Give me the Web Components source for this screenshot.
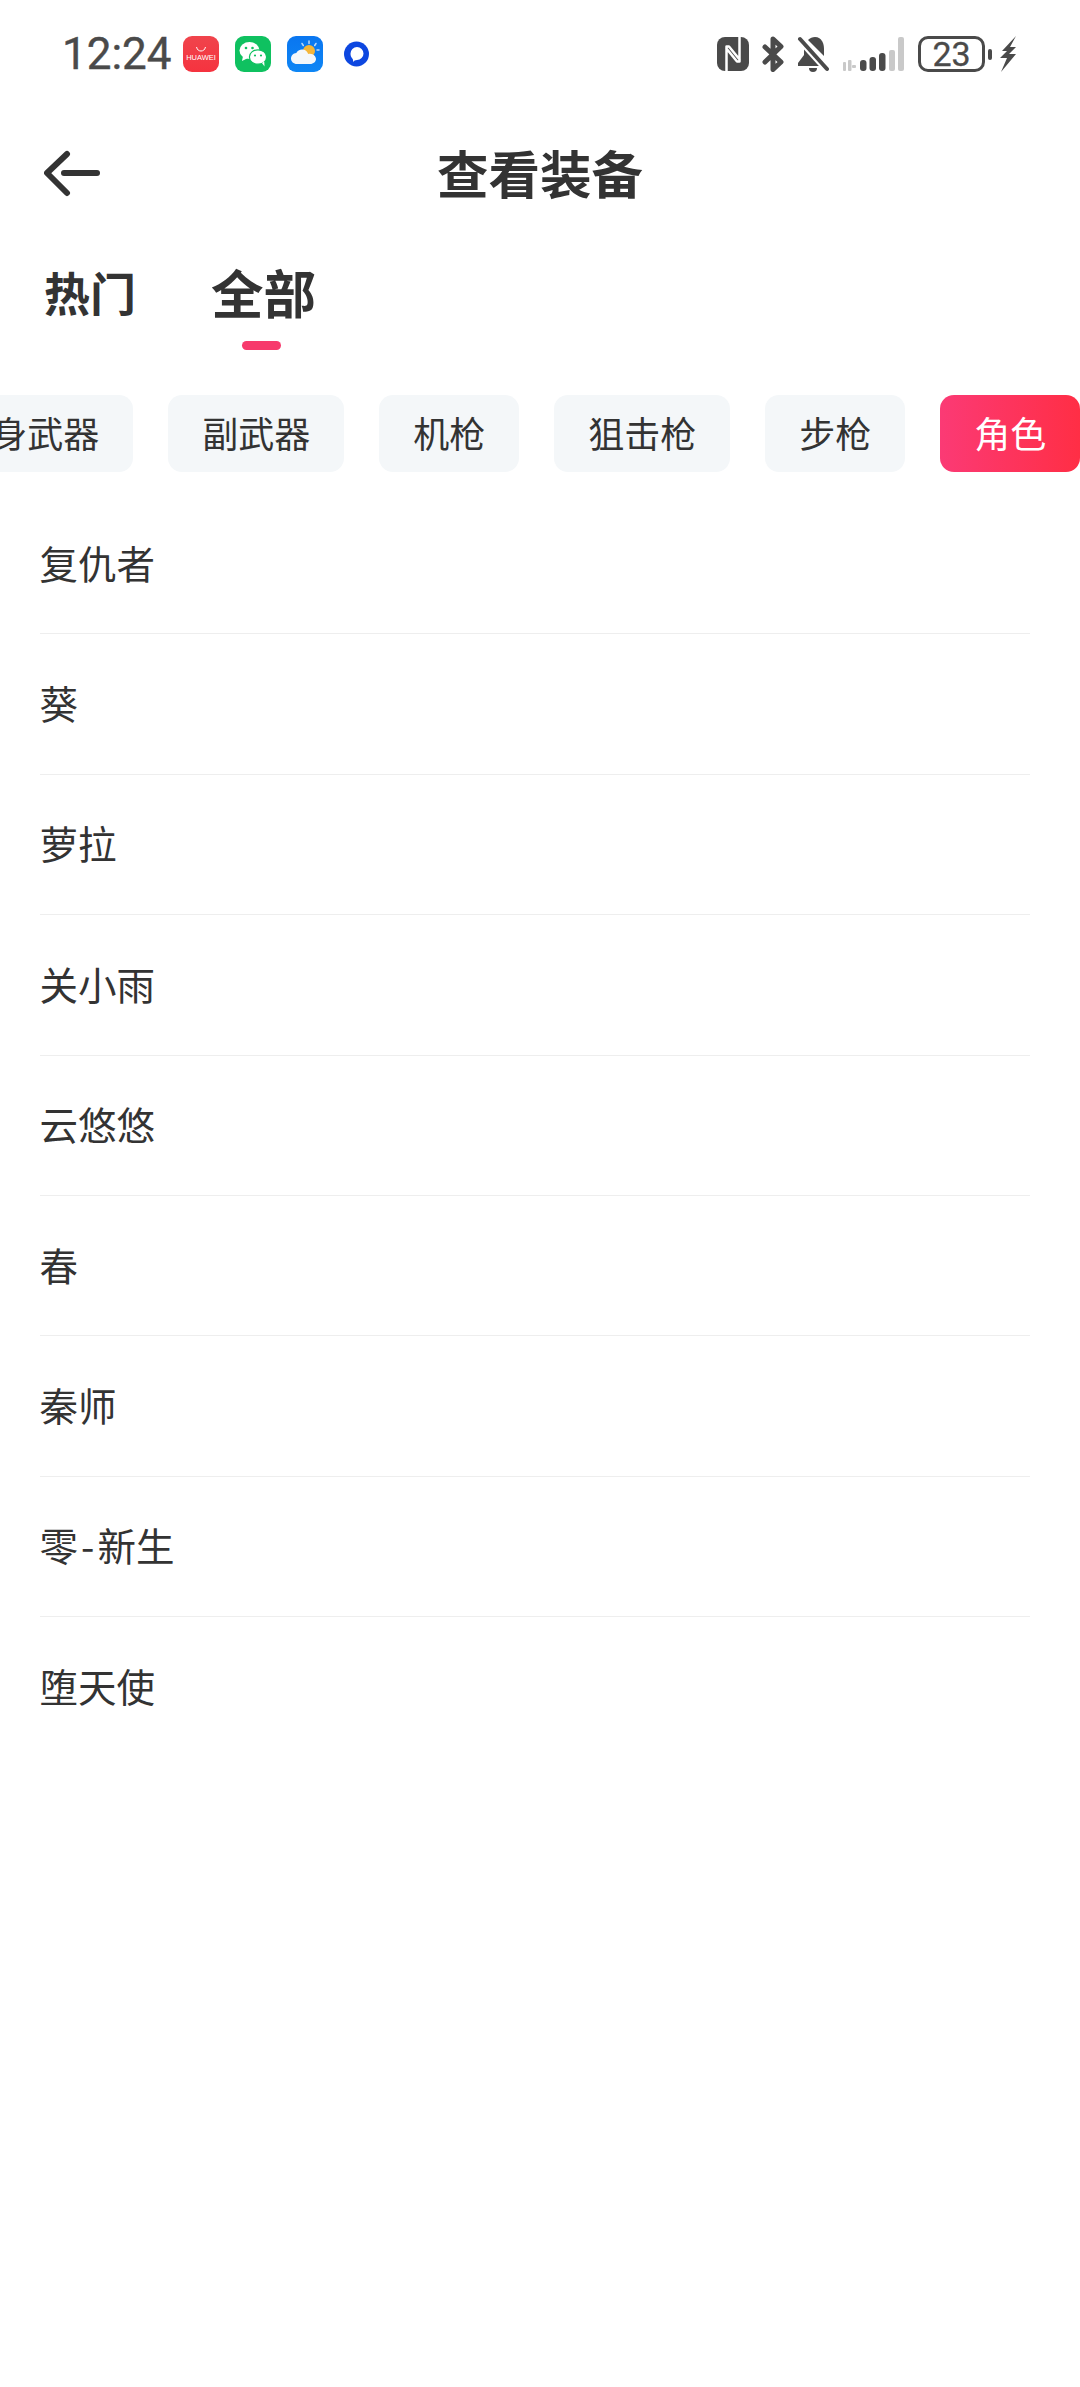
<!DOCTYPE html>
<html lang="zh">
<head>
<meta charset="utf-8">
<title>查看装备</title>
<style>
  html, body { margin: 0; background: #fff; }
  body { font-family: "Noto Sans CJK SC", "Noto Sans", sans-serif; color: #333; }
</style>
</head>
<body>
<equip-page>
  <status-bar></status-bar>
  <nav-bar>查看装备</nav-bar>
  <tab-row></tab-row>
  <chip-row></chip-row>
  <equip-list>
    <equip-row>复仇者</equip-row>
    <equip-row>葵</equip-row>
    <equip-row>萝拉</equip-row>
    <equip-row>关小雨</equip-row>
    <equip-row>云悠悠</equip-row>
    <equip-row>春</equip-row>
    <equip-row>秦师</equip-row>
    <equip-row>零<span style="margin: 0 3px">-</span>新生</equip-row>
    <equip-row>堕天使</equip-row>
  </equip-list>
</equip-page>

<script>
class EquipPage extends HTMLElement {
  constructor() {
    super();
    this.attachShadow({ mode: "open" });
    this.shadowRoot.innerHTML = `
      <style>
        :host { display: flex; flex-direction: column; width: 1080px; height: 2387px; overflow: hidden; background: #fff; }
      </style>
      <slot></slot>
    `;
  }
}

class StatusBar extends HTMLElement {
  constructor() {
    super();
    this.attachShadow({ mode: "open" });
    this.shadowRoot.innerHTML = `
      <style>
        :host { display: flex; align-items: center; justify-content: space-between; height: 108px; padding: 0 63px 0 62px; box-sizing: border-box; color: #4a4a4a; }
        .left, .right { display: flex; align-items: center; }
        .time { font: 400 44px/1 Roboto, sans-serif; -webkit-text-stroke: 0.4px #4a4a4a; width: 121px; }
        .apps { display: flex; gap: 16px; align-items: center; }
        .app { width: 36px; height: 36px; border-radius: 9px; display: flex; align-items: center; justify-content: center; position: relative; overflow: hidden; }
        .huawei { background: linear-gradient(#f0444c, #f5333f); flex-direction: column; color: #fff; }
        .huawei span { font: 500 7.500px/1 "Liberation Sans", sans-serif; margin-top: 1px; }
        .wechat { background: #0fc160; }
        .weather { background: linear-gradient(#0a76f0, #0e86f5); }
        svg { display: block; }
        .right { gap: 13px; }
        .batt { display: flex; align-items: center; gap: 3px; margin-left: 1px; }
        .cell { width: 67px; height: 36px; box-sizing: border-box; border: 3px solid #4a4a4a; border-radius: 10px; font: 400 34px/1 Roboto, sans-serif; -webkit-text-stroke: 0.3px #4a4a4a; display: flex; align-items: center; justify-content: center; }
        .nub { width: 4px; height: 11px; background: #4a4a4a; border-radius: 2px; }
        .bolt { margin-left: 4px; }
      </style>
      <div class="left">
        <span class="time">12:24</span>
        <div class="apps">
          <div class="app huawei">
            <svg width="14" height="7" viewBox="0 0 14 7"><path d="M2.500 1c.8 3 2.400 4 4.500 4s3.700-1 4.500-4" fill="none" stroke="#fff" stroke-width="1"/></svg>
            <span>HUAWEI</span>
          </div>
          <div class="app wechat">
            <svg width="30" height="28" viewBox="0 0 30 28">
              <ellipse cx="11.500" cy="10.500" rx="10" ry="8.500" fill="#fff"/>
              <path d="M5 16l-1 5 6-3z" fill="#fff"/>
              <ellipse cx="20" cy="17" rx="8.600" ry="7.200" fill="#fff" stroke="#0fc160" stroke-width="1.200"/>
              <path d="M24 23l2.500 3.500-.3-5z" fill="#fff"/>
              <circle cx="8" cy="8" r="1.300" fill="#0fc160"/><circle cx="14.500" cy="8" r="1.300" fill="#0fc160"/>
              <circle cx="17" cy="15.500" r="1.100" fill="#0fc160"/><circle cx="23" cy="15.500" r="1.100" fill="#0fc160"/>
            </svg>
          </div>
          <div class="app weather">
            <svg width="36" height="36" viewBox="0 0 36 36">
              <circle cx="22" cy="15" r="6" fill="#f4b63a"/>
              <path d="M22 5v2.500M15 7.500l1.300 2M29 7.500l-1.300 2M32 14h-2" stroke="#bcd9f7" stroke-width="1.500" stroke-linecap="round"/>
              <path d="M10 28c-3.500 0-6-2.500-6-5.500s2.300-5.300 5.300-5.500c1.300-2.600 4-4 6.700-3.500 2.600.4 4.500 2.300 5.200 4.500 .5-.1 1-.2 1.800-.2 3.600 0 6 2.800 6 5.200s-2.400 5-6 5z" fill="#f4f7fa"/>
            </svg>
          </div>
          <div class="app">
            <svg width="36" height="36" viewBox="0 0 36 36">
              <circle cx="17.500" cy="18" r="12.500" fill="#0d47e0"/>
              <path d="M11.500 17.500a6.500 6.500 0 1 1 6.500 6.500c-2 0-3 .7-4 2 .3-1.700 0-2.700-.9-3.700-1-1.200-1.600-2.800-1.600-4.800z" fill="#fff"/>
            </svg>
          </div>
        </div>
      </div>
      <div class="right">
        <svg width="32" height="34" viewBox="0 0 32 34">
          <rect width="32" height="34" rx="8" fill="#4a4a4a"/>
          <path d="M9.500 34V9.500h2.500L23 23M22.500 0v24.500H20L9 11" fill="none" stroke="#fff" stroke-width="2.500" stroke-linejoin="round"/>
        </svg>
        <svg width="22" height="36" viewBox="0 0 22 36">
          <path d="M3 11l16 15-8 7.500V3l8 7.500L3 26" fill="none" stroke="#4a4a4a" stroke-width="5" stroke-linecap="round" stroke-linejoin="round"/>
        </svg>
        <svg width="32" height="36" viewBox="0 0 32 36">
          <path d="M11 4c2-2 4.500-3 7-3 7 0 9 7 9 12v7z" fill="#4a4a4a"/>
          <path d="M7 9v10l-6 8v3h25z" fill="#4a4a4a"/>
          <path d="M12 32h8a4 4 0 0 1-8 0z" fill="#4a4a4a"/>
          <path d="M3 3l27 30" stroke="#fff" stroke-width="8"/>
          <path d="M3 3l27 30" stroke="#4a4a4a" stroke-width="4" stroke-linecap="round"/>
        </svg>
        <svg width="62" height="36" viewBox="0 0 62 36">
          <g fill="#c9c9c9">
            <rect x="1" y="26" width="3" height="9" rx="1"/><rect x="6" y="24" width="3.500" height="11" rx="1"/><rect x="10" y="29" width="4" height="3" rx="1"/>
            <rect x="47" y="14" width="6" height="21" rx="2"/><rect x="56" y="1" width="6" height="34" rx="2"/>
          </g>
          <g fill="#4a4a4a">
            <rect x="18" y="24" width="6.500" height="11" rx="3"/><rect x="27.500" y="21" width="6.500" height="14" rx="3"/><rect x="37" y="17" width="6.500" height="18" rx="3"/>
          </g>
        </svg>
        <div class="batt">
          <div class="cell">23</div>
          <div class="nub"></div>
          <svg class="bolt" width="18" height="36" viewBox="0 0 18 36">
            <path d="M17 0L3 15h5l-7 7h7L2 36l15-18h-7l7-7h-6z" fill="#4a4a4a"/>
          </svg>
        </div>
      </div>
    `;
  }
}

class NavBar extends HTMLElement {
  constructor() {
    super();
    this.attachShadow({ mode: "open" });
    this.shadowRoot.innerHTML = `
      <style>
        :host { display: grid; grid-template-columns: 1fr auto 1fr; align-items: center; height: 132px; padding: 0 44px; box-sizing: border-box; }
        h1 { margin: 0; padding-bottom: 4px; font-size: 51.500px; font-weight: 700; line-height: 1; color: #333; }
        svg { display: block; }
      </style>
      <svg width="58" height="48" viewBox="0 0 58 48">
        <path d="M23 4L3 23l20 20" fill="none" stroke="#333" stroke-width="6" stroke-linecap="round" stroke-linejoin="round"/>
        <path d="M20 23h33" fill="none" stroke="#333" stroke-width="6" stroke-linecap="round"/>
      </svg>
      <h1><slot></slot></h1>
      <span></span>
    `;
  }
}

class TabRow extends HTMLElement {
  constructor() {
    super();
    this.attachShadow({ mode: "open" });
    this.shadowRoot.innerHTML = `
      <style>
        :host { display: flex; align-items: center; gap: 75px; height: 126px; padding: 0 44px 24px; box-sizing: border-box; }
        .tab { position: relative; font-weight: 700; font-size: 46px; line-height: 1; color: #333; }
        .on { font-size: 52.500px; }
        .on::after { content: ""; position: absolute; left: 31px; top: 76px; width: 39px; height: 9px; border-radius: 5px; background: #f73a6c; }
      </style>
      <span class="tab">热门</span>
      <span class="tab on">全部</span>
    `;
  }
}

class ChipRow extends HTMLElement {
  constructor() {
    super();
    this.attachShadow({ mode: "open" });
    const items = ["随身武器", "副武器", "机枪", "狙击枪", "步枪"];
    this.shadowRoot.innerHTML = `
      <style>
        :host { display: flex; justify-content: flex-end; gap: 35.500px; height: 77px; margin-top: 29px; overflow: hidden; }
        span { flex: none; display: flex; align-items: center; padding: 0 33.750px 4px; border-radius: 14px; background: #f4f7f9; font-size: 36px; line-height: 1; color: #333; }
        .on { background: linear-gradient(90deg, #fb3a75, #ff2e45); color: #fff; }
      </style>
      ${items.map((t) => `<span>${t}</span>`).join("")}
      <span class="on">角色</span>
    `;
  }
}

class EquipList extends HTMLElement {
  constructor() {
    super();
    this.attachShadow({ mode: "open" });
    this.shadowRoot.innerHTML = `
      <style>
        :host { display: block; margin-top: 22px; padding: 0 50px 0 39.500px; }
        ::slotted(equip-row:last-child) { border-bottom: none; }
      </style>
      <slot></slot>
    `;
  }
}

class EquipRow extends HTMLElement {
  constructor() {
    super();
    this.attachShadow({ mode: "open" });
    this.shadowRoot.innerHTML = `
      <style>
        :host { display: flex; align-items: center; height: 140.400px; padding-bottom: 4px; box-sizing: border-box; border-bottom: 1.500px solid #eeeeee; font-size: 38.500px; color: #333; }
      </style>
      <slot></slot>
    `;
  }
}

customElements.define("equip-page", EquipPage);
customElements.define("status-bar", StatusBar);
customElements.define("nav-bar", NavBar);
customElements.define("tab-row", TabRow);
customElements.define("chip-row", ChipRow);
customElements.define("equip-list", EquipList);
customElements.define("equip-row", EquipRow);
</script>
</body>
</html>
